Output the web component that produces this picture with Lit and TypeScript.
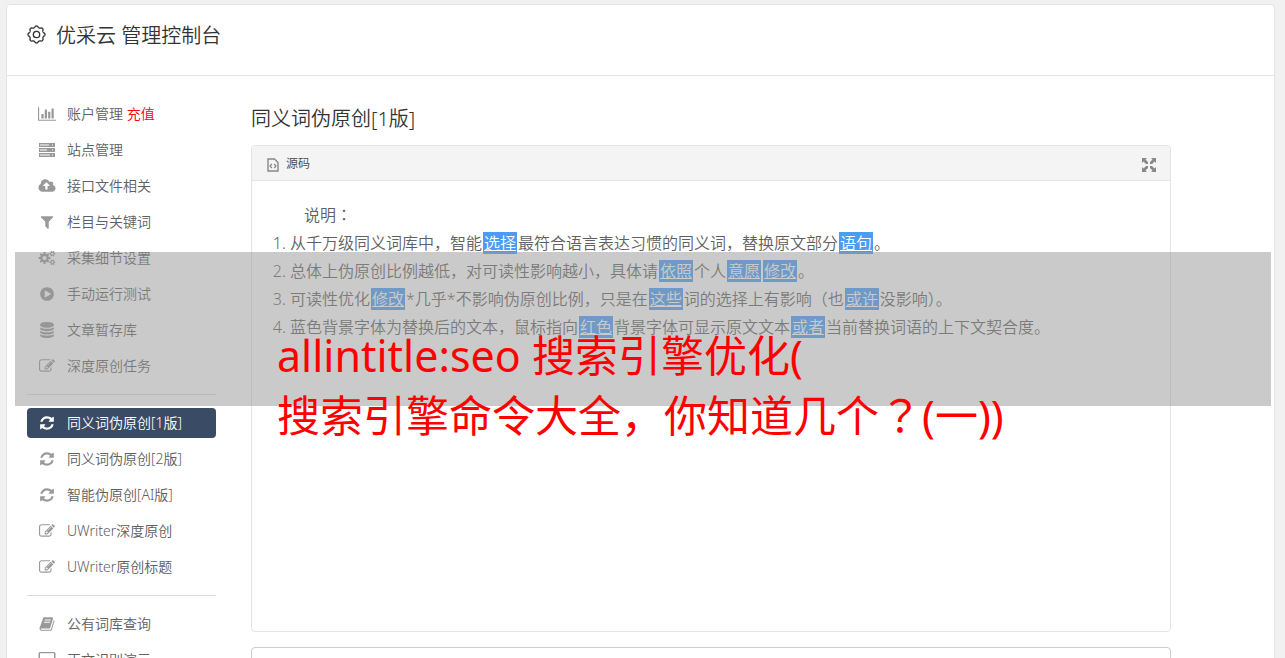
import { LitElement, html, css, svg } from "lit";
import { customElement } from "lit/decorators.js";
import { classMap } from "lit/directives/class-map.js";

/** Outline of a gear with flat teeth. */
function gear(cx: number, cy: number, outer: number, inner: number, teeth: number, hole: number): string {
  const step = (Math.PI * 2) / teeth;
  const at = (r: number, a: number) =>
    `${(cx + r * Math.cos(a)).toFixed(2)} ${(cy + r * Math.sin(a)).toFixed(2)}`;
  let d = "";
  for (let i = 0; i < teeth; i++) {
    const a = i * step;
    d += `${i ? "L" : "M"}${at(inner, a - step * 0.3)}L${at(outer, a - step * 0.2)}L${at(outer, a + step * 0.2)}L${at(inner, a + step * 0.3)}`;
  }
  return `${d}ZM${cx - hole} ${cy}a${hole} ${hole} 0 1 0 ${hole * 2} 0a${hole} ${hole} 0 1 0 ${-hole * 2} 0Z`;
}

/** Outline of a cog with soft lobes, for the page title. */
function scallop(cx: number, cy: number, radius: number, depth: number, lobes: number): string {
  const points: string[] = [];
  for (let i = 0; i < 144; i++) {
    const a = (i / 144) * Math.PI * 2;
    const w = Math.cos(a * lobes);
    const r = radius + depth * Math.sign(w) * Math.pow(Math.abs(w), 0.6);
    points.push(`${(cx + r * Math.cos(a)).toFixed(2)} ${(cy + r * Math.sin(a)).toFixed(2)}`);
  }
  return `M${points.join("L")}Z`;
}

const EDIT =
  "M888 1184l116-116-152-152-116 116v56h96v96h56zm440-720q-16-16-33 1l-350 350q-17 17-1 33t33-1l350-350q17-17 1-33zm80 594v190q0 119-84.5 203.5t-203.5 84.5h-832q-119 0-203.5-84.5t-84.5-203.5v-832q0-119 84.5-203.5t203.5-84.5h832q63 0 117 25 15 7 18 23 3 17-9 29l-49 49q-14 14-32 8-23-6-45-6h-832q-66 0-113 47t-47 113v832q0 66 47 113t113 47h832q66 0 113-47t47-113v-126q0-13 9-22l64-64q15-15 35-7t20 29zm-96-738l288 288-672 672h-288v-288zm444 132l-92 92-288-288 92-92q28-28 68-28t68 28l152 152q28 28 28 68t-28 68z";

const ICONS: Record<string, { box: string; d: string }> = {
  chart: {
    box: "0 0 2048 1792",
    d: "M640 896v512H384V896h256zm384-512v1024H768V384h256zm1024 1152v128H0V128h128v1408h1920zm-640-896v768h-256V640h256zm384-384v1152h-256V256h256z",
  },
  server: {
    box: "0 0 18 16",
    d: "M1 1h16v4H1zM2 2.500v1h9v-1zM14 2.500v1h1v-1zM1 6h16v4H1zM2 7.500v1h7v-1zM14 7.500v1h1v-1zM1 11h16v4H1zM2 12.500v1h10v-1zM14 12.500v1h1v-1z",
  },
  upload: {
    box: "0 0 1920 1792",
    d: "M1280 864q0-14-9-23l-352-352q-9-9-23-9t-23 9l-351 351q-10 12-10 24 0 14 9 23t23 9h224v352q0 13 9.5 22.5t22.5 9.5h192q13 0 22.5-9.5t9.5-22.5v-352h224q13 0 22.5-9.5t9.5-22.5zm640 288q0 159-112.5 271.5t-271.5 112.5h-1088q-185 0-316.5-131.5t-131.5-316.5q0-130 70-240t188-165q-2-30-2-43 0-212 150-362t362-150q156 0 285.5 87t188.5 231q71-62 166-62 106 0 181 75t75 181q0 76-41 138 130 31 213.5 135.5t83.5 238.5z",
  },
  filter: {
    box: "0 0 1792 1792",
    d: "M1595 295q17 41-14 70l-493 493v742q0 42-39 59-13 5-25 5-27 0-45-19l-256-256q-19-19-19-45V858L211 365q-31-29-14-70 17-39 59-39h1280q42 0 59 39z",
  },
  cogs: {
    box: "0 0 18 16",
    d: gear(6.5, 8, 6, 4.4, 8, 2.1) + gear(14.4, 3.7, 3, 2.1, 6, 1) + gear(14.4, 12.3, 3, 2.1, 6, 1),
  },
  play: {
    box: "0 0 1792 1792",
    d: "M896 128q209 0 385.5 103t279.5 279.5 103 385.5-103 385.5-279.5 279.5-385.5 103-385.5-103-279.5-279.5-103-385.5 103-385.5 279.5-279.5 385.5-103zm384 823q32-18 32-55t-32-55l-544-320q-31-19-64-1-32 19-32 56v640q0 37 32 56 16 8 32 8 17 0 32-9z",
  },
  database: {
    box: "0 0 1792 1792",
    d: "M896 768q237 0 443-43t325-127v170q0 69-103 128t-280 93.5-385 34.5-385-34.5-280-93.5-103-128v-170q119 84 325 127t443 43zm0 768q237 0 443-43t325-127v170q0 69-103 128t-280 93.5-385 34.5-385-34.5-280-93.5-103-128v-170q119 84 325 127t443 43zm0-384q237 0 443-43t325-127v170q0 69-103 128t-280 93.5-385 34.5-385-34.5-280-93.5-103-128v-170q119 84 325 127t443 43zm0-1152q208 0 385 34.5t280 93.5 103 128v128q0 69-103 128t-280 93.5-385 34.5-385-34.5-280-93.5-103-128v-128q0-69 103-128t280-93.5 385-34.5z",
  },
  edit: { box: "0 0 1792 1792", d: EDIT },
  refresh: {
    box: "0 0 1792 1792",
    d: "M1639 1056q0 5-1 7-64 268-268 434.5t-478 166.5q-146 0-282.5-55t-243.5-157l-129 129q-19 19-45 19t-45-19-19-45v-448q0-26 19-45t45-19h448q26 0 45 19t19 45-19 45l-137 137q71 66 161 102t187 36q134 0 250-65t186-179q11-17 53-117 8-23 30-23h192q13 0 22.5 9.5t9.5 22.5zm25-800v448q0 26-19 45t-45 19h-448q-26 0-45-19t-19-45 19-45l138-138q-148-137-349-137-134 0-250 65t-186 179q-11 17-53 117-8 23-30 23h-199q-13 0-22.5-9.5t-9.5-22.5v-7q65-268 270-434.5t480-166.5q146 0 284 55.5t245 156.5l130-129q19-19 45-19t45 19 19 45z",
  },
  book: {
    box: "0 0 1792 1792",
    d: "M1703 478q40 57 18 129l-275 906q-19 64-76.5 107.5t-122.5 43.5h-923q-77 0-148.5-53.5t-99.5-131.5q-24-67-2-127 0-4 3-27t4-37q1-8-3-21.5t-3-19.5q2-11 8-21t16.5-23.5 16.5-23.5q23-38 45-91.5t30-91.5q3-10 .5-30t-.5-28q3-11 17-28t17-23q21-36 42-92t25-90q1-9-2.5-32t.5-28q4-13 22-30.5t22-22.5q19-26 42.5-84.5t27.5-96.5q1-8-3-25.5t-2-26.5q2-8 9-18t18-23 17-21q8-12 16.5-30.5t15-35 16-36 19.5-32 26.5-23.5 36-11.5 47.5 5.5l-1 3q38-9 51-9h761q74 0 114 56t18 130l-274 906q-36 119-71.5 153.5t-128.5 34.5h-869q-27 0-38 15-11 16-1 43 24 70 144 70h923q29 0 56-15.5t35-41.5l300-987q7-22 5-57 38 15 59 43zm-1064 2q-4 13 2 22.5t20 9.5h608q13 0 25.5-9.5t16.5-22.5l21-64q4-13-2-22.5t-20-9.5h-608q-13 0-25.5 9.5t-16.5 22.5zm-83 256q-4 13 2 22.5t20 9.5h608q13 0 25.5-9.5t16.5-22.5l21-64q4-13-2-22.5t-20-9.5h-608q-13 0-25.5 9.5t-16.5 22.5z",
  },
  laptop: {
    box: "0 0 18 16",
    d: "M2 0h14a1.500 1.500 0 0 1 1.500 1.500v9a1.500 1.500 0 0 1-1.500 1.500H2A1.500 1.500 0 0 1 .500 10.500v-9A1.500 1.500 0 0 1 2 0zM2 1.200v9.600h14V1.200zM0 13h18v2H0z",
  },
};

interface Entry {
  icon: string;
  label: string;
  note?: string;
  active?: boolean;
}

const GROUPS: Entry[][] = [
  [
    { icon: "chart", label: "账户管理", note: "充值" },
    { icon: "server", label: "站点管理" },
    { icon: "upload", label: "接口文件相关" },
    { icon: "filter", label: "栏目与关键词" },
    { icon: "cogs", label: "采集细节设置" },
    { icon: "play", label: "手动运行测试" },
    { icon: "database", label: "文章暂存库" },
    { icon: "edit", label: "深度原创任务" },
  ],
  [
    { icon: "refresh", label: "同义词伪原创[1版]", active: true },
    { icon: "refresh", label: "同义词伪原创[2版]" },
    { icon: "refresh", label: "智能伪原创[AI版]" },
    { icon: "edit", label: "UWriter深度原创" },
    { icon: "edit", label: "UWriter原创标题" },
  ],
  [
    { icon: "book", label: "公有词库查询" },
    { icon: "laptop", label: "正文识别演示" },
  ],
];

const mark = (word: string) => html`<a class="word" href="#">${word}</a>`;

/** Full-width marks that sit in the middle of their cell. */
const centered = css`
  .centered {
    font-family: "Noto Sans CJK TC", sans-serif;
    line-height: 1;
  }
`;

@customElement("side-menu")
class SideMenu extends LitElement {
  static styles = css`
    :host { display: block; }
    .group {
      list-style: none;
      margin: 0;
      padding: 0;
      display: flex;
      flex-direction: column;
      gap: 6px;
    }
    .group + .group {
      margin-top: 13px;
      border-top: 1px solid #dcdcdc;
      padding-top: 13px;
    }
    .item {
      display: flex;
      align-items: center;
      gap: 11px;
      height: 30px;
      padding: 0 11px;
      border-radius: 4px;
      color: #606060;
      font-size: 14px;
      line-height: 30px;
      text-decoration: none;
      white-space: nowrap;
    }
    .item.active { background: #3a4b66; color: #fff; }
    .icon {
      display: flex;
      justify-content: center;
      width: 18px;
      color: #999;
      flex: none;
    }
    .active .icon { color: #fff; }
    .icon svg { height: 16px; width: 18px; fill: currentColor; fill-rule: evenodd; }
    .note { color: #f00; }
  `;

  render() {
    return html`<nav aria-label="菜单">
      ${GROUPS.map(
        (group) => html`<ul class="group">
          ${group.map(
            (e) => html`<li>
              <a class=${classMap({ item: true, active: !!e.active })} href="#">
                <span class="icon"><svg viewBox=${ICONS[e.icon].box} aria-hidden="true">${svg`<path d=${ICONS[e.icon].d}></path>`}</svg></span>
                <span>${e.label}${e.note ? html` <span class="note">${e.note}</span>` : ""}</span>
              </a>
            </li>`
          )}
        </ul>`
      )}
    </nav>`;
  }
}

@customElement("rich-editor")
class RichEditor extends LitElement {
  static styles = [
    centered,
    css`
      :host {
        display: block;
        border: 1px solid #e4e4e4;
        border-radius: 4px;
        overflow: hidden;
      }
      .bar {
        display: flex;
        justify-content: space-between;
        align-items: center;
        height: 34px;
        padding: 0 14px 0 15px;
        background: #f4f4f4;
        border-bottom: 1px solid #e4e4e4;
      }
      button {
        display: flex;
        align-items: center;
        gap: 7px;
        border: 0;
        padding: 2px 0 0;
        background: none;
        color: #444;
        font: inherit;
        font-size: 12px;
        line-height: 20px;
      }
      button svg { height: 14px; margin-top: 2px; }
      .source svg { width: 12px; }
      .expand svg { width: 14px; }
      .body {
        min-height: 410px;
        padding: 20px;
        color: #606060;
        font-size: 16px;
        line-height: 28px;
      }
      .lead { margin: 0; text-indent: 2em; }
      ol { margin: 0; padding-left: 18px; }
      .word {
        margin: 0 1px;
        padding: 0 1px;
        background: #4a9cf5;
        color: #fff;
      }
    `,
  ];

  render() {
    return html`
      <div class="bar">
        <button class="source" type="button">
          <svg viewBox="0 0 12 14" fill="none" stroke="#888" aria-hidden="true">
            <path d="M1 1h6.500l3.500 3.500v8.500H1z" stroke-width="1.400"></path>
            <path d="M4.800 6L3 8l1.800 2M7.200 6L9 8l-1.800 2" stroke-width="1.200"></path>
          </svg>
          源码
        </button>
        <button class="expand" type="button" aria-label="全屏">
          <svg viewBox="0 0 14 14" fill="#888" aria-hidden="true">
            <path d="M0 0h5L3.500 1.500 6 4v2H4L1.500 3.500 0 5zM14 0v5l-1.500-1.500L10 6H8V4l2.500-2.500L9 0zM0 14V9l1.500 1.500L4 8h2v2l-2.500 2.500L5 14zM14 14H9l1.500-1.500L8 10V8h2l2.500 2.500L14 9z"></path>
          </svg>
        </button>
      </div>
      <div class="body">
        <p class="lead">说明<span class="centered" lang="zh-Hant">：</span></p>
        <ol>
          <li>从千万级同义词库中，智能${mark("选择")}最符合语言表达习惯的同义词，替换原文部分${mark("语句")}。</li>
          <li>总体上伪原创比例越低，对可读性影响越小，具体请${mark("依照")}个人${mark("意愿")}${mark("修改")}。</li>
          <li>可读性优化${mark("修改")}*几乎*不影响伪原创比例，只是在${mark("这些")}词的选择上有影响（也${mark("或许")}没影响）。</li>
          <li>蓝色背景字体为替换后的文本，鼠标指向${mark("红色")}背景字体可显示原文文本${mark("或者")}当前替换词语的上下文契合度。</li>
        </ol>
      </div>
    `;
  }
}

@customElement("app-root")
class AppRoot extends LitElement {
  static styles = [
    centered,
    css`
      :host {
        display: block;
        position: relative;
        box-sizing: border-box;
        height: 100vh;
        overflow: hidden;
        padding: 4px 10px 0 6px;
        background: #f1f1f1;
        color: #333;
        font-family: "Noto Sans", "Noto Sans CJK SC", sans-serif;
        font-weight: 350;
      }
      .card {
        min-height: 100%;
        background: #fff;
        border: 1px solid #e4e4e4;
        border-radius: 4px;
      }
      header {
        display: flex;
        align-items: center;
        gap: 10px;
        height: 62px;
        padding: 0 20px 8px;
        border-bottom: 1px solid #e4e4e4;
      }
      header svg { width: 19px; height: 19px; margin-bottom: 4px; fill: none; stroke: #333; }
      h1, h2 { margin: 0; font-size: 20px; line-height: 30px; font-weight: inherit; }
      .columns { display: flex; gap: 35px; padding: 23px 103px 0 20px; }
      side-menu { width: 189px; flex: none; }
      main { flex: 1; min-width: 0; display: flex; flex-direction: column; }
      h2 { padding: 5px 0 11px; }
      textarea {
        display: block;
        box-sizing: border-box;
        width: 100%;
        height: 200px;
        margin-top: 15px;
        border: 1px solid #ccc;
        border-radius: 4px;
        background: #fff;
        resize: none;
      }
      .banner {
        position: absolute;
        top: 252px;
        left: 15px;
        right: 14px;
        box-sizing: border-box;
        height: 154px;
        padding: 74px 0 0 262px;
        background: rgba(150, 150, 150, 0.5);
        pointer-events: none;
      }
      .banner p {
        margin: 0;
        color: #f00;
        font-size: 43px;
        line-height: 60px;
        font-weight: 400;
        white-space: nowrap;
      }
    `,
  ];

  render() {
    return html`
      <div class="card">
        <header>
          <svg viewBox="0 0 19 19" aria-hidden="true">
            <path d=${scallop(9.5, 9.5, 7.8, 0.7, 8)} stroke-width="1.300"></path>
            <circle cx="9.500" cy="9.500" r="3.200" stroke-width="1.300"></circle>
          </svg>
          <h1>优采云 管理控制台</h1>
        </header>
        <div class="columns">
          <side-menu></side-menu>
          <main>
            <h2>同义词伪原创[1版]</h2>
            <rich-editor></rich-editor>
            <textarea aria-label="原文"></textarea>
          </main>
        </div>
      </div>
      <div class="banner">
        <p>allintitle:seo 搜索引擎优化(</p>
        <p>搜索引擎命令大全，你知道几个<span class="centered" lang="zh-Hant">？</span>(一))</p>
      </div>
    `;
  }
}
